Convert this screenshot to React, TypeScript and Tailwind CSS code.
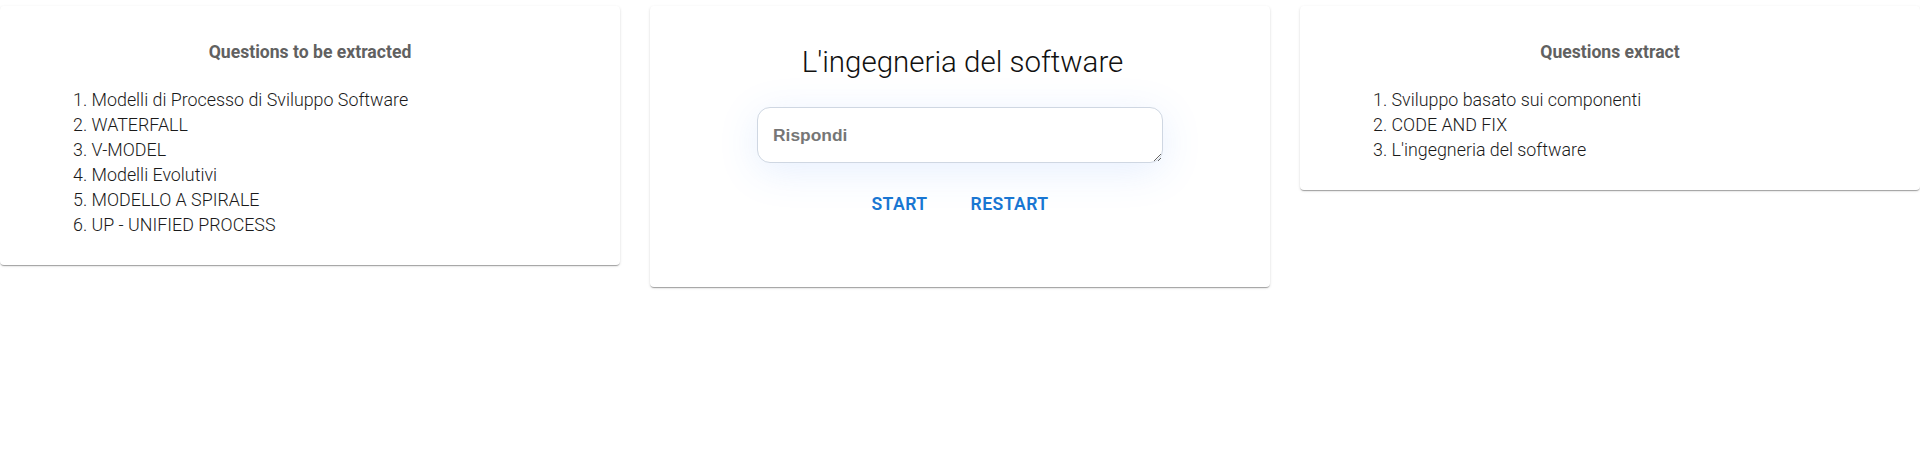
import React from "react";

const left = [
  "Modelli di Processo di Sviluppo Software",
  "WATERFALL",
  "V-MODEL",
  "Modelli Evolutivi",
  "MODELLO A SPIRALE",
  "UP - UNIFIED PROCESS",
];
const right = ["Sviluppo basato sui componenti", "CODE AND FIX", "L'ingegneria del software"];

const cardCls =
  "bg-white rounded-[4px] shadow-[0px_2px_1px_-1px_rgba(0,0,0,0.2),0px_1px_1px_0px_rgba(0,0,0,0.14),0px_1px_3px_0px_rgba(0,0,0,0.12)]";

function ListCard({ title, items }: { title: string; items: string[] }) {
  return (
    <div className={`${cardCls} pt-[34px] pb-[28px]`}>
      <div className="text-center text-[17.6px] leading-[24px] font-bold text-[#616161]">{title}</div>
      <div className="mt-[23px] pl-[73px] text-[17.85px] leading-[25px] font-light text-[#1a1a1a]">
        {items.map((t, i) => (
          <div key={i}>
            {i + 1}. {t}
          </div>
        ))}
      </div>
    </div>
  );
}

export default function App() {
  return (
    <div
      className="w-[1920px] h-[456px] bg-white pt-[6px]"
      style={{ fontFamily: "Roboto, 'Liberation Sans', sans-serif" }}
    >
      <div className="grid grid-cols-3 gap-[30px] items-start">
        <ListCard title="Questions to be extracted" items={left} />
        <div className={`${cardCls} pt-[38px] pb-[65px] flex flex-col items-center`}>
          <div className="pl-[5px] text-[29.5px] leading-[36px] font-light text-[#111]">L'ingegneria del software</div>
          <textarea
            placeholder="Rispondi"
            className="mt-[27px] w-[406px] h-[56px] rounded-[13px] border border-[#cfd7e2] bg-white px-[15px] pt-[16px] pb-[14px] text-[17.4px] leading-[22px] font-bold text-[#333] placeholder:text-[#767676] outline-none shadow-[0_8px_40px_rgba(59,130,246,0.13)]"
            style={{ fontFamily: "'Liberation Sans', Arial, sans-serif" }}
          />
          <div className="mt-[23px] flex gap-[27px]">
            <button className="px-2 py-[6px] text-[17.6px] leading-[24px] font-semibold tracking-[0.45px] text-[#1976d2] uppercase">
              START
            </button>
            <button className="px-2 py-[6px] text-[17.6px] leading-[24px] font-semibold tracking-[0.45px] text-[#1976d2] uppercase">
              RESTART
            </button>
          </div>
        </div>
        <ListCard title="Questions extract" items={right} />
      </div>
    </div>
  );
}
